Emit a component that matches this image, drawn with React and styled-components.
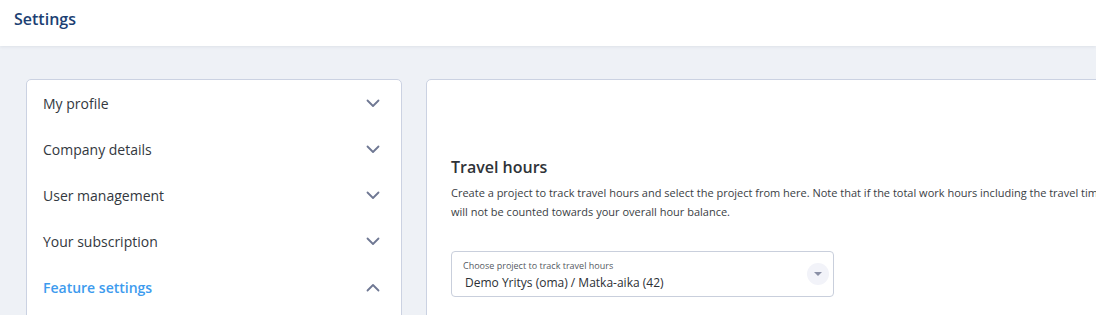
import styled, {createGlobalStyle} from "styled-components";

const GlobalStyle = createGlobalStyle`
  html, body {
    margin: 0;
    padding: 0;
    overflow: hidden;
    background: #eef1f6;
    font-family: "Open Sans", "Liberation Sans", sans-serif;
  }
`;

const menuItems = [
    {label: "My profile"},
    {label: "Company details"},
    {label: "User management"},
    {label: "Your subscription"},
    {label: "Feature settings", open: true},
];

const Chevron = ({up}) => (
    <svg width="14" height="9" viewBox="0 0 14 9" fill="none">
        <path
            d={up ? "M1.5 7.5 L7 2 L12.5 7.5" : "M1.5 1.5 L7 7 L12.5 1.5"}
            stroke="#6f7893"
            strokeWidth="1.8"
            strokeLinecap="round"
            strokeLinejoin="round"
        />
    </svg>
);

export default function App() {
    return (
        <Page>
            <GlobalStyle/>
            <Header>
                <Title>Settings</Title>
            </Header>
            <Content>
                <MenuCard>
                    {menuItems.map((item) => (
                        <MenuRow key={item.label}>
                            <MenuLabel $active={item.open}>{item.label}</MenuLabel>
                            <Chevron up={item.open}/>
                        </MenuRow>
                    ))}
                </MenuCard>
                <SettingsCard>
                    <SectionTitle>Travel hours</SectionTitle>
                    <Description>
                        Create a project to track travel hours and select the project from here. Note that if the total work hours including the travel time exceed the daily limit, the extra time
                        <br/>
                        will not be counted towards your overall hour balance.
                    </Description>
                    <SelectBox>
                        <SelectText>
                            <SelectLabel>Choose project to track travel hours</SelectLabel>
                            <SelectValue>Demo Yritys (oma) / Matka-aika (42)</SelectValue>
                        </SelectText>
                        <ArrowButton>
                            <svg width="10" height="6" viewBox="0 0 10 6">
                                <path d="M1 1 H9 L5 5 Z" fill="#8a90a6"/>
                            </svg>
                        </ArrowButton>
                    </SelectBox>
                </SettingsCard>
            </Content>
        </Page>
    );
}

const Page = styled.div`
  width: 1096px;
  height: 315px;
  overflow: hidden;
  background: #eef1f6;
`;

const Header = styled.header`
  height: 46px;
  background: #ffffff;
  display: flex;
  align-items: center;
  padding: 0 14px 8px;
  box-sizing: border-box;
  box-shadow: 0 1px 3px rgba(40, 50, 80, 0.08);
  position: relative;
`;

const Title = styled.h1`
  margin: 0;
  font-size: 16px;
  font-weight: 600;
  color: #1c3f73;
`;

const Content = styled.main`
  display: flex;
  align-items: flex-start;
  gap: 24px;
  padding: 33px 0 0 26px;
`;

const Card = styled.section`
  background: #ffffff;
  border: 1px solid #cbd2e2;
  border-radius: 5px;
  box-sizing: border-box;
  flex-shrink: 0;
`;

const MenuCard = styled(Card)`
  width: 376px;
  height: 260px;
`;

const MenuRow = styled.div`
  height: 46px;
  display: flex;
  align-items: center;
  justify-content: space-between;
  padding: 0 21px 0 16px;
`;

const MenuLabel = styled.span`
  font-size: 14px;
  color: ${(p) => (p.$active ? "#3d9bee" : "#333840")};
  font-weight: ${(p) => (p.$active ? 600 : 400)};
`;

const SettingsCard = styled(Card)`
  width: 720px;
  height: 260px;
  padding: 76px 24px 0;
`;

const SectionTitle = styled.h2`
  margin: 0;
  font-size: 16px;
  font-weight: 600;
  color: #2f3338;
  line-height: 22px;
`;

const Description = styled.p`
  margin: 5px 0 0;
  font-size: 11px;
  line-height: 19px;
  color: #3a3e44;
  white-space: nowrap;
`;

const SelectBox = styled.div`
  margin-top: 30px;
  width: 383px;
  height: 46px;
  border: 1px solid #c9cfdc;
  border-radius: 4px;
  box-sizing: border-box;
  display: flex;
  align-items: center;
  justify-content: space-between;
  padding: 0 4px 0 11px;
`;

const SelectText = styled.div`
  display: flex;
  flex-direction: column;
  padding-top: 2px;
`;

const SelectLabel = styled.span`
  font-size: 9px;
  line-height: 13px;
  color: #555a63;
`;

const SelectValue = styled.span`
  font-size: 12px;
  line-height: 18px;
  margin-top: 2px;
  color: #2c3036;
  padding-left: 2px;
`;

const ArrowButton = styled.div`
  width: 22px;
  height: 22px;
  border-radius: 50%;
  background: #f2f3f9;
  display: flex;
  align-items: center;
  justify-content: center;
  margin-bottom: 1px;
`;
